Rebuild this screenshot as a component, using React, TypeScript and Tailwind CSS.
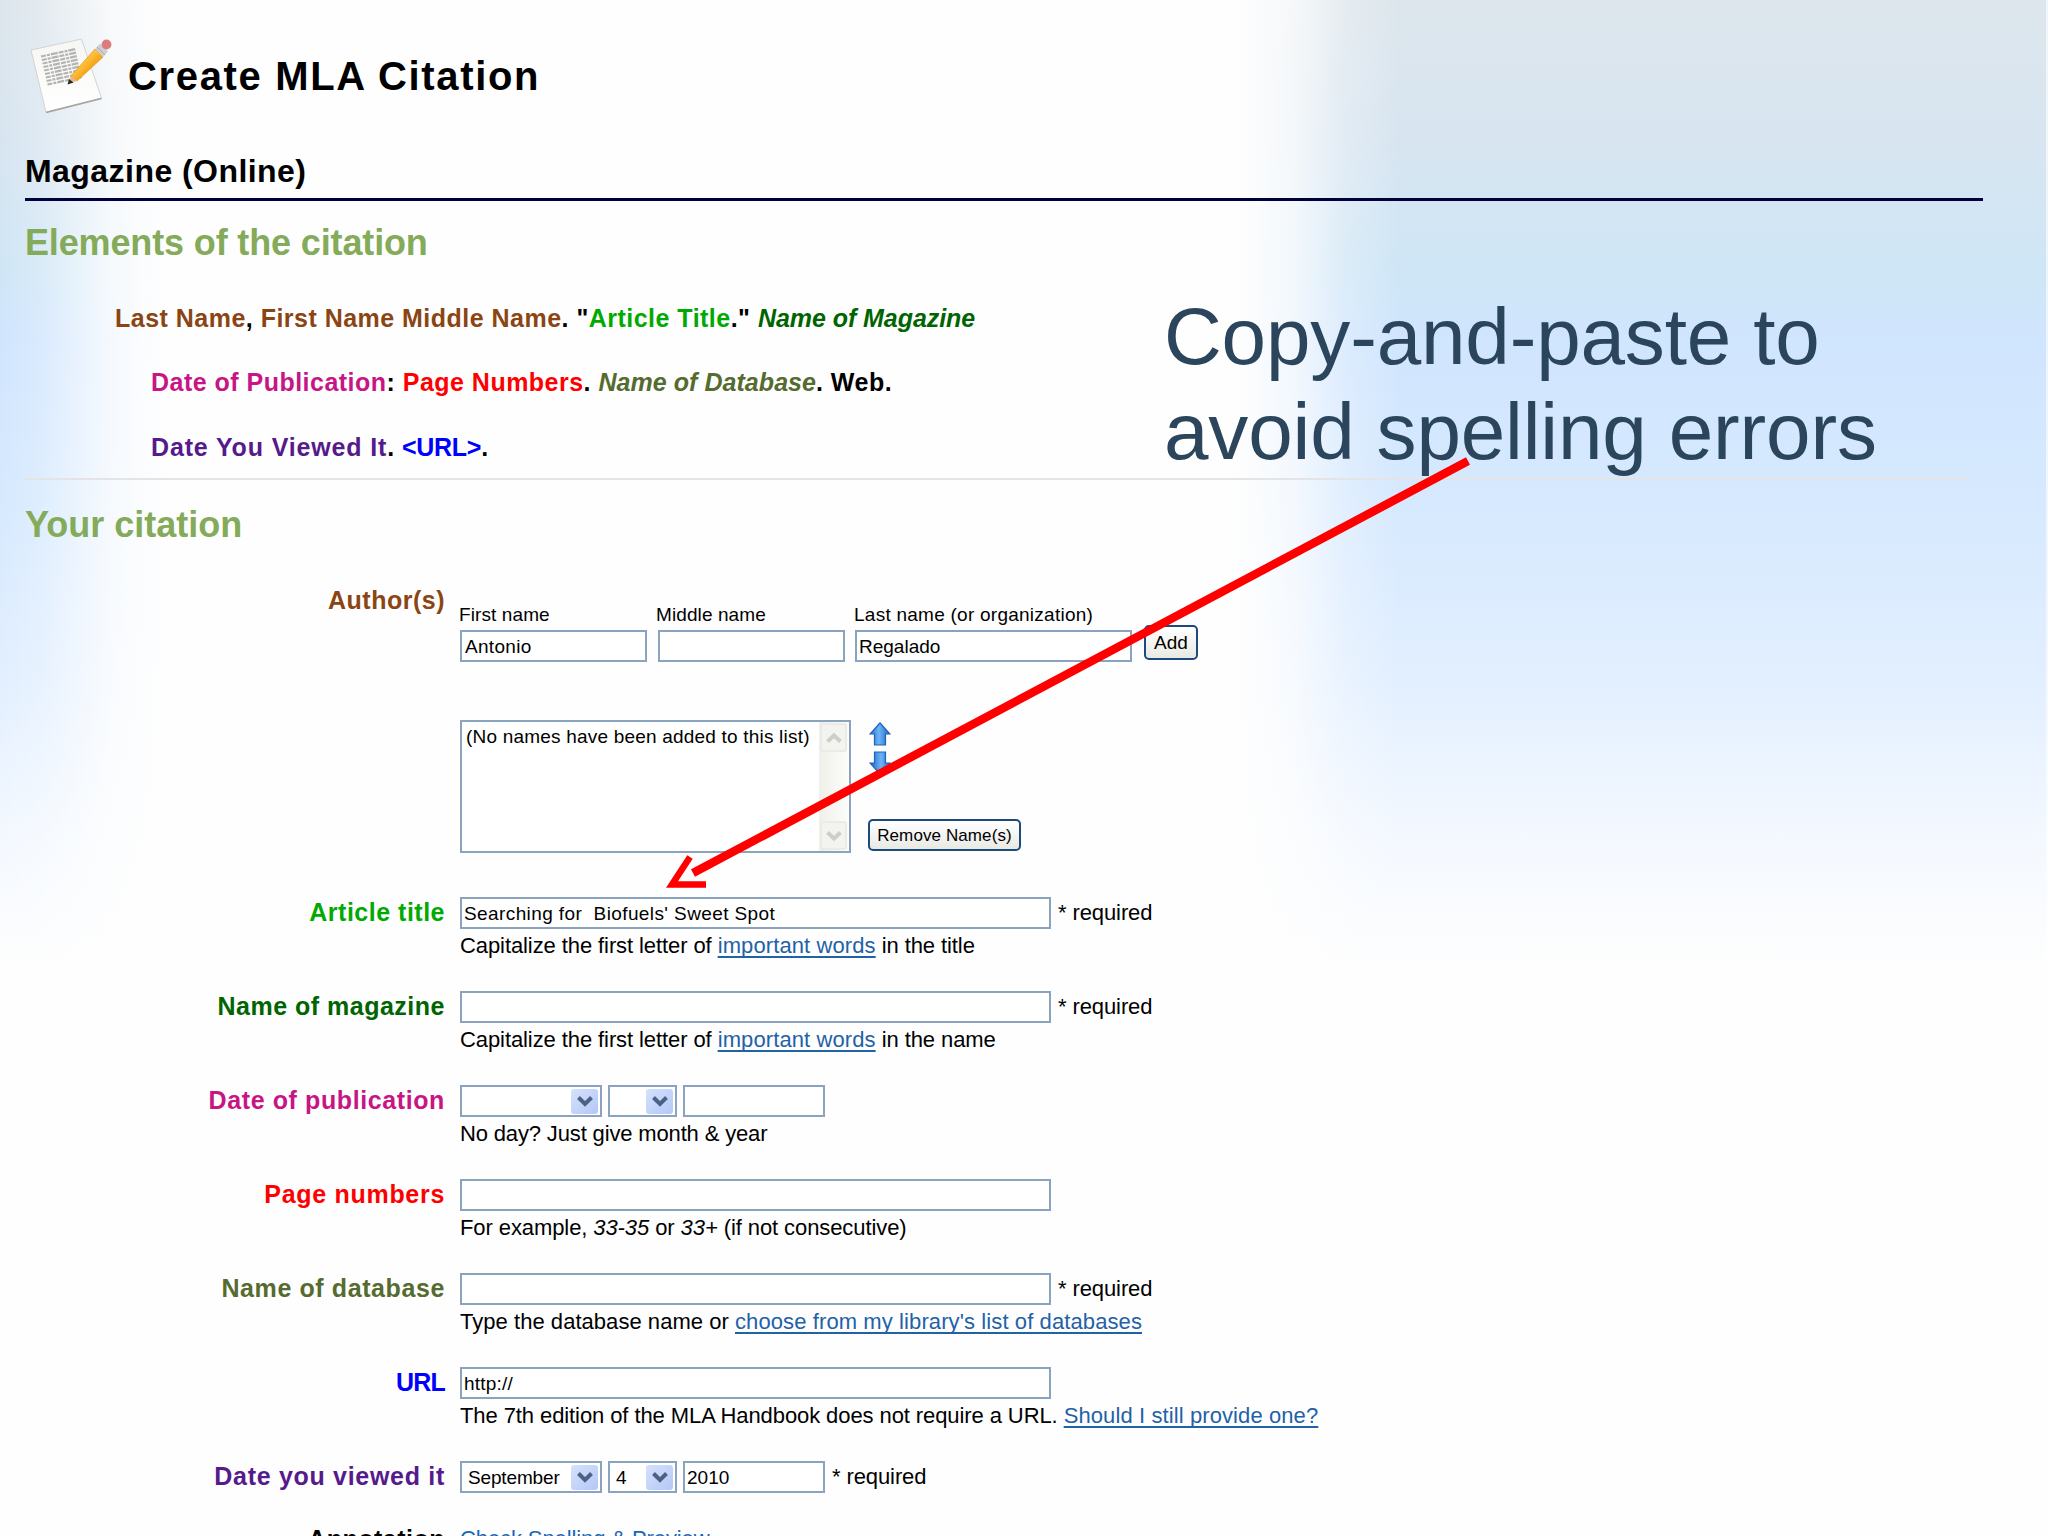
import React from "react";

function NoteIcon() {
  return (
    <svg width="84" height="78" viewBox="0 0 84 78" fill="none">
      <defs>
        <linearGradient id="paper" x1="0" y1="0" x2="0" y2="1">
          <stop offset="0" stopColor="#f6f6f4" />
          <stop offset="1" stopColor="#ffffff" />
        </linearGradient>
        <linearGradient id="pencil" x1="0" y1="0" x2="1" y2="1">
          <stop offset="0.3" stopColor="#ffd44c" />
          <stop offset="0.6" stopColor="#f7a51c" />
        </linearGradient>
      </defs>
      <path d="M1 12L51.500 1L71.500 60L16 74Z" fill="url(#paper)" stroke="#d4d4d0" strokeWidth="1" />
      <path d="M16 74.500L71.500 60.500" stroke="#a4a4a0" strokeWidth="1.8" />
      {[0, 1, 2, 3, 4, 5, 6, 7, 8].map((i) => (
        <path
          key={i}
          d={`M${11 + i * 0.8} ${18.500 + i * 3.500}L${46 + i * 0.8} ${11 + i * 3.500}`}
          stroke="#b4b4b2"
          strokeWidth="2.2"
          strokeDasharray="5 1 3 1 7 1"
        />
      ))}
      <path d="M41 38L65 11L73 19L47 43Z" fill="url(#pencil)" stroke="#e8952a" strokeWidth="0.8" />
      <path d="M38 46L41 38L47 43Z" fill="#e2bb86" />
      <path d="M37.500 46.500L39 41L43.500 44.500Z" fill="#2a2a2a" />
      <path d="M65 11L70 5.500L78 13.500L73 19Z" fill="#cfcfcf" />
      <path d="M67 9L75 17" stroke="#a9a9a9" strokeWidth="1" />
      <circle cx="76.500" cy="6.500" r="4.900" fill="#dc7c7c" />
    </svg>
  );
}

function MoveArrow({ down }: { down?: boolean }) {
  return (
    <svg width="22" height="24" viewBox="0 0 22 24" className={down ? "rotate-180" : ""}>
      <defs>
        <linearGradient id="blue" x1="0" y1="0" x2="1" y2="0">
          <stop offset="0" stopColor="#1f6fd0" />
          <stop offset="0.45" stopColor="#6fb4f5" />
          <stop offset="1" stopColor="#1a62c4" />
        </linearGradient>
      </defs>
      <path d="M11 1L21 12H16.500V23H5.500V12H1Z" fill="url(#blue)" stroke="#1c63bd" strokeWidth="1.2" />
    </svg>
  );
}

function ScrollButton({ down }: { down?: boolean }) {
  return (
    <div className="flex h-[29px] w-[27px] items-center justify-center rounded-[3px] border-2 border-[#ebebe6] bg-[#f3f3ef]">
      <svg width="16" height="12" viewBox="0 0 16 12" className={down ? "rotate-180" : ""}>
        <path d="M1.500 9.500L8 3.500L14.500 9.500" fill="none" stroke="#cfcfca" strokeWidth="4" />
      </svg>
    </div>
  );
}

function TextBox({ value, width }: { value?: string; width: string }) {
  return (
    <div className={`flex h-8 shrink-0 items-center whitespace-pre border-2 border-[#8aa4bf] bg-white pt-px pl-[2px] text-[19px] leading-none ${width}`}>
      {value}
    </div>
  );
}

function Select({ value, width }: { value?: string; width: string }) {
  return (
    <div className={`flex h-8 shrink-0 items-center justify-between border-2 border-[#8aa4bf] bg-white pl-1.5 pr-[2px] text-[19px] leading-none ${width}`}>
      <span className="pt-px tracking-[-0.15px]">{value}</span>
      <div className="flex h-[25px] w-[27px] items-center justify-center rounded-[3px] bg-linear-to-br from-[#d5e1fc] to-[#b4c8f6]">
        <svg width="16" height="13" viewBox="0 0 16 13">
          <path d="M1.500 2.500L8 9L14.500 2.500" fill="none" stroke="#4d6185" strokeWidth="4" />
        </svg>
      </div>
    </div>
  );
}

function Link({ children }: { children: React.ReactNode }) {
  return <a className="tracking-[0.1px] text-[#1f62a8] underline decoration-2 underline-offset-[3px] [text-decoration-skip-ink:none]">{children}</a>;
}

type RowProps = {
  label: string;
  labelStyle: string;
  height?: string;
  hint?: React.ReactNode;
  required?: boolean;
  children: React.ReactNode;
};

function Row({ label, labelStyle, height = "h-[94px]", hint, required, children }: RowProps) {
  return (
    <div className={`flex ${height}`}>
      <div className={`w-[445px] shrink-0 pt-px text-right text-[25px] leading-[28px] font-bold ${labelStyle}`}>{label}</div>
      <div className="ml-[15px] whitespace-nowrap">
        <div className="flex h-8 items-center">
          {children}
          {required && <span className="ml-[7px] pb-px text-[22px] leading-[26px] tracking-[-0.1px]">* required</span>}
        </div>
        <div className="mt-1 text-[22px] leading-[26px] tracking-[-0.09px]">{hint}</div>
      </div>
    </div>
  );
}

function Dates({ month, day, year }: { month?: string; day?: string; year?: string }) {
  return (
    <div className="flex gap-1.5">
      <Select value={month} width="w-[142px]" />
      <Select value={day} width="w-[69px]" />
      <TextBox value={year} width="w-[142px]" />
    </div>
  );
}

function Authors() {
  return (
    <div className="flex h-[311px]">
      <div className="w-[445px] shrink-0 text-right text-[25px] leading-[28px] font-bold tracking-[0.5px] text-[#8b4513]">Author(s)</div>
      <div className="ml-[15px] pt-[19px] text-[19px]">
        <div className="flex items-end">
          <div className="mr-[11px]">
            <div className="-ml-px h-[25px] leading-[20px] tracking-[0.1px]">First name</div>
            <TextBox value="Antonio" width="w-[187px] tracking-[0.3px] pl-[3px]" />
          </div>
          <div className="mr-[10px]">
            <div className="-ml-[2px] h-[25px] leading-[20px] tracking-[0.1px]">Middle name</div>
            <TextBox width="w-[187px]" />
          </div>
          <div>
            <div className="-ml-px h-[25px] leading-[20px] tracking-[0.25px]">Last name (or organization)</div>
            <TextBox value="Regalado" width="w-[277px]" />
          </div>
          <button className="mb-[2px] ml-[12px] h-[35px] w-[54px] rounded-[5px] border-2 border-[#1c4a7c] bg-linear-to-b from-white to-[#e9e9e4] text-[19px] leading-none">Add</button>
        </div>
        <div className="mt-[58px] flex h-[133px]">
          <div className="flex w-[391px] justify-between border-2 border-[#8aa4bf] bg-white pr-px">
            <div className="pt-[4px] pl-1 text-[19px] leading-[22px] tracking-[0.2px]">(No names have been added to this list)</div>
            <div className="flex w-[29px] flex-col items-center justify-between bg-linear-to-r from-[#f0f0ea] to-[#fcfcfa] py-px">
              <ScrollButton />
              <ScrollButton down />
            </div>
          </div>
          <div className="ml-[17px] flex flex-col justify-between">
            <div className="flex flex-col gap-[5px] pt-[2px] pl-px">
              <MoveArrow />
              <MoveArrow down />
            </div>
            <button className="mb-[2px] h-[32px] w-[153px] rounded-[5px] border-2 border-[#1c4a7c] bg-linear-to-b from-white to-[#e9e9e4] text-[17px] leading-none tracking-[0.1px]">Remove Name(s)</button>
          </div>
        </div>
      </div>
    </div>
  );
}

export default function App(): React.JSX.Element {
  return (
    <div className="relative h-[1536px] w-[2048px] overflow-hidden bg-[#fefefe] font-['Liberation_Sans',Arial,sans-serif] text-black">
      {/* slide background: blue on both edges, fading out towards the bottom */}
      <div className="absolute inset-x-0 top-0 h-[1000px] bg-[linear-gradient(to_bottom,#dde6ec_0px,#d8e5f0_130px,#cfe6f6_270px,#d0e5fe_340px,#d6e9fe_500px,#e2efff_680px,#f3f8ff_830px,#fefefe_970px)]" />
      <div className="absolute inset-x-0 top-0 h-[1000px] bg-[linear-gradient(to_right,#fefefe00_0px,#fefefe33_40px,#fefefecc_110px,#fefefe_165px,#fefefe_1235px,#fefefebb_1295px,#fefefe44_1345px,#fefefe00_1400px)]" />
      <div className="absolute top-0 right-0 h-[960px] w-[2px] bg-white/60" />

      <div className="relative">
        <header className="flex h-[142px] items-start pt-[38px] pl-[30px]">
          <NoteIcon />
          <h1 className="mt-[14px] ml-[14px] text-[40px] leading-[48px] font-bold tracking-[1.65px]">Create MLA Citation</h1>
        </header>
        <h2 className="ml-[25px] h-[56px] pt-[11px] text-[32px] leading-[36px] font-bold tracking-[0.45px]">Magazine (Online)</h2>
        <div className="ml-[25px] h-[3px] w-[1958px] bg-[#00003c]" />

        <h3 className="ml-[25px] pt-[21px] text-[36px] leading-[42px] font-bold tracking-[-0.14px] text-[#84ab5a]">Elements of the citation</h3>
        <div className="mt-[22px] -mb-[1.5px] pl-[151px] text-[25px] leading-[64.5px] font-bold tracking-[0.48px] whitespace-nowrap">
          <div className="-ml-[36px]">
            <span className="text-[#8b4513]">Last Name</span>, <span className="text-[#8b4513]">First Name Middle Name</span>. "<span className="text-[#00aa00]">Article Title</span>."{" "}
            <i className="tracking-[-0.05px] text-[#006400]">Name of Magazine</i>
          </div>
          <div className="-mt-px">
            <span className="text-[#c71585]">Date of Publication</span>: <span className="text-[#ff0000]">Page Numbers</span>. <i className="tracking-[0.05px] text-[#556b2f]">Name of Database</i>. Web.
          </div>
          <div className="pt-px">
            <span className="tracking-[0.85px] text-[#551a8b]">Date You Viewed It</span>. <span className="tracking-[-0.3px] text-[#0000ff]">&lt;URL&gt;</span>.
          </div>
        </div>
        <div className="ml-[25px] h-[2px] w-[1945px] bg-[#e4e4e6]" />
        <h3 className="ml-[25px] h-[106px] pt-[24px] text-[36px] leading-[42px] font-bold text-[#84ab5a]">Your citation</h3>

        <Authors />
        <Row label="Article title" labelStyle="tracking-[0.5px] text-[#00aa00]" required hint={<>Capitalize the first letter of <Link>important words</Link> in the title</>}>
          <TextBox value="Searching for  Biofuels' Sweet Spot" width="w-[591px] tracking-[0.4px]" />
        </Row>
        <Row label="Name of magazine" labelStyle="tracking-[0.5px] text-[#006400]" required hint={<>Capitalize the first letter of <Link>important words</Link> in the name</>}>
          <TextBox width="w-[591px]" />
        </Row>
        <Row label="Date of publication" labelStyle="tracking-[0.6px] text-[#c71585]" hint={<span className="tracking-[-0.15px]">No day? Just give month & year</span>}>
          <Dates />
        </Row>
        <Row label="Page numbers" labelStyle="tracking-[0.7px] text-[#ff0000]" hint={<>For example, <i>33-35</i> or <i>33+</i> (if not consecutive)</>}>
          <TextBox width="w-[591px]" />
        </Row>
        <Row label="Name of database" labelStyle="tracking-[0.6px] text-[#556b2f]" required hint={<><span className="tracking-[0.04px]">Type the database name or </span><Link>choose from my library's list of databases</Link></>}>
          <TextBox width="w-[591px]" />
        </Row>
        <Row label="URL" labelStyle="tracking-[-0.8px] text-[#0000ff]" hint={<>The 7th edition of the MLA Handbook does not require a URL. <Link>Should I still provide one?</Link></>}>
          <TextBox value="http://" width="w-[591px] tracking-[0.2px]" />
        </Row>
        <Row label="Date you viewed it" labelStyle="tracking-[0.7px] text-[#551a8b]" height="h-[63px]" required>
          <Dates month="September" day="4" year="2010" />
        </Row>
        <Row label="Annotation" labelStyle="tracking-[0.5px]">
          <span className="pb-[3px] text-[22px] leading-[26px] tracking-[-0.1px] text-[#1b66b8]">Check Spelling & Preview</span>
        </Row>
      </div>

      {/* callout over the form */}
      <p className="absolute top-[289px] left-[1164px] text-[80px] leading-[95px] tracking-[-0.15px] whitespace-nowrap text-[#2b455c]">
        Copy-and-paste to
        <br />
        avoid spelling errors
      </p>
      <svg className="absolute top-0 left-0" width="2048" height="1536" fill="none" stroke="#ff0000">
        <path d="M1468 461L693 873" strokeWidth="8.500" />
        <path d="M690 857L672 884.500H706" strokeWidth="6.500" />
      </svg>
    </div>
  );
}
